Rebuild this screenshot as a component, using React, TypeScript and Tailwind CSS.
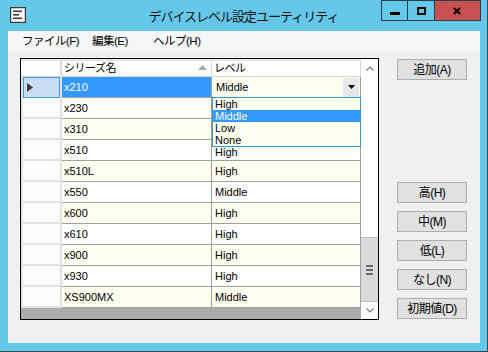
import React from "react";

const rows = [
  { name: "x210", level: "Middle" },
  { name: "x230", level: "" },
  { name: "x310", level: "" },
  { name: "x510", level: "High" },
  { name: "x510L", level: "High" },
  { name: "x550", level: "Middle" },
  { name: "x600", level: "High" },
  { name: "x610", level: "High" },
  { name: "x900", level: "High" },
  { name: "x930", level: "High" },
  { name: "XS900MX", level: "Middle" },
];

const levels = ["High", "Middle", "Low", "None"];

const WinButton = ({ label, className = "" }: { label: string; className?: string }) => (
  <div
    className={`w-[70px] h-[21px] bg-[#e1e1e1] border border-[#adadad] flex items-center justify-center text-[12px] leading-none tracking-[-0.5px] text-black ${className}`}
  >
    {label}
  </div>
);

const App = () => {
  return (
    <div className="w-[488px] h-[352px] bg-[#65c8eb] border-r border-b border-[#3b4a55] flex flex-col font-['Liberation_Sans','Noto_Sans_CJK_JP',sans-serif] text-black select-none overflow-hidden">
      {/* title bar */}
      <div className="h-[31px] flex shrink-0">
        <div className="w-[106px] pl-[10px] pt-[7px]">
          <svg width="16" height="16" viewBox="0 0 16 16">
            <rect x="0.5" y="0.5" width="15" height="15" fill="#fff" stroke="#3a3a3a" strokeWidth="1.5" />
            <rect x="3" y="3.5" width="9" height="1.6" fill="#3a3a3a" />
            <rect x="3" y="7" width="6" height="1.6" fill="#3a3a3a" />
            <rect x="3" y="10.5" width="9" height="1.6" fill="#3a3a3a" />
          </svg>
        </div>
        <div className="flex-1 flex items-center justify-center text-[13px] tracking-[-1px] text-[#111] pt-[2px]">
          デバイスレベル設定ユーティリティ
        </div>
        <div className="w-[106px] flex items-start justify-end pr-[6px]">
          <div className="w-[28px] h-[21px] border border-[#2c3c48] flex items-center justify-center">
            <div className="w-[10px] h-[3px] bg-black mt-[6px]" />
          </div>
          <div className="w-[27px] h-[21px] border border-l-0 border-[#2c3c48] flex items-center justify-center">
            <div className="w-[9px] h-[8px] border-2 border-black" />
          </div>
          <div className="w-[47px] h-[21px] bg-[#c75050] border border-l-0 border-[#2c3c48] flex items-center justify-center">
            <svg width="8" height="8" viewBox="0 0 8 8">
              <path d="M1 1 L7 7 M7 1 L1 7" stroke="#000" strokeWidth="2" />
            </svg>
          </div>
        </div>
      </div>

      {/* client */}
      <div className="ml-[8px] w-[472px] h-[312px] bg-[#f0f0f0] flex flex-col">
        <div className="h-[21px] bg-[#f5f6f7] flex items-center text-[11.5px] tracking-[-0.5px] pl-[14px]">
          <span className="w-[70px]">ファイル(F)</span>
          <span className="w-[61px]">編集(E)</span>
          <span>ヘルプ(H)</span>
        </div>

        <div className="flex pl-[12px] pt-[6px]">
          {/* grid */}
          <div className="w-[359px] h-[262px] border border-black bg-[#ababab] flex">
            <div className="w-[340px] flex flex-col">
              {/* header */}
              <div className="h-[18px] flex bg-white border-t-2 border-[#e6e6e6] text-[11px] tracking-[-0.5px]">
                <div className="w-[41px] h-full border-r-2 border-b border-[#d9d9d9]" />
                <div className="w-[150px] h-full border-r border-b border-[#d9d9d9] flex items-center pl-[2px] relative">
                  シリーズ名
                  <svg className="absolute right-[4px] top-[4px]" width="9" height="5" viewBox="0 0 9 5">
                    <path d="M0 5 L4.5 0 L9 5 Z" fill="#a8a8a8" />
                  </svg>
                </div>
                <div className="w-[149px] h-full border-r border-b border-[#d9d9d9] flex items-center pl-[2px]">
                  レベル
                </div>
              </div>

              {rows.map((r, i) => {
                const bg = i % 2 === 0 ? "bg-[#fffff0]" : "bg-white";
                const selected = i === 0;
                return (
                  <div key={r.name} className="h-[21px] flex text-[11px]">
                    {selected ? (
                      <div className="w-[41px] h-full bg-white border-l-2 border-r-2 border-[#e2e2e2] flex">
                        <div className="flex-1 bg-[#c9def5] border border-[#3c98d1] flex items-center pl-[3px]">
                          <svg width="6" height="9" viewBox="0 0 6 9">
                            <path d="M0 0 L6 4.5 L0 9 Z" fill="#3a3a3a" />
                          </svg>
                        </div>
                      </div>
                    ) : (
                      <div className="w-[41px] h-full bg-[#fcfcfc] border-l-2 border-r-2 border-b-2 border-[#e2e2e2]" />
                    )}
                    <div
                      className={`w-[150px] h-full border-r border-b border-[#a0a0a0] flex items-center pl-[2px] ${
                        selected ? "bg-[#3399ff] text-white" : bg
                      }`}
                    >
                      {r.name}
                    </div>
                    <div className={`w-[149px] h-full border-r border-b border-[#a0a0a0] flex items-center relative ${bg}`}>
                      {selected ? (
                        <>
                          <span className="pl-[4px] flex-1">{r.level}</span>
                          <div className="w-[16px] h-[19px] mr-[1px] bg-[#e8e8e8] flex items-center justify-center">
                            <svg width="7" height="4" viewBox="0 0 7 4">
                              <path d="M0 0 L7 0 L3.5 4 Z" fill="#000" />
                            </svg>
                          </div>
                          <div className="absolute left-0 top-[20px] w-[149px] h-[50px] border border-[#2e9ad3] bg-[#fffff0] z-10 flex flex-col">
                            {levels.map((l) => (
                              <div
                                key={l}
                                className={`h-[12px] leading-[12px] pl-[2px] ${
                                  l === "Middle" ? "bg-[#3399ff] text-white" : ""
                                }`}
                              >
                                {l}
                              </div>
                            ))}
                          </div>
                        </>
                      ) : (
                        <span className={`pl-[3px] ${i === 3 ? "pt-[5px]" : ""}`}>{r.level}</span>
                      )}
                    </div>
                  </div>
                );
              })}
            </div>

            {/* scrollbar */}
            <div className="w-[17px] flex flex-col bg-white">
              <div className="h-[18px] flex items-center justify-center">
                <svg width="8" height="5" viewBox="0 0 8 5">
                  <path d="M0.5 4.5 L4 1 L7.5 4.5" stroke="#7a7a7a" strokeWidth="1.2" fill="none" />
                </svg>
              </div>
              <div className="h-[160px]" />
              <div className="h-[65px] bg-[#dadada] border-y border-[#c2c2c2] flex flex-col items-center justify-center gap-[2px]">
                <div className="w-[7px] h-[2px] bg-[#6a6a6a]" />
                <div className="w-[7px] h-[2px] bg-[#6a6a6a]" />
                <div className="w-[7px] h-[2px] bg-[#6a6a6a]" />
              </div>
              <div className="h-[17px] flex items-center justify-center">
                <svg width="8" height="5" viewBox="0 0 8 5">
                  <path d="M0.5 0.5 L4 4 L7.5 0.5" stroke="#7a7a7a" strokeWidth="1.2" fill="none" />
                </svg>
              </div>
            </div>
          </div>

          {/* buttons */}
          <div className="ml-[18px] pt-[1px] flex flex-col">
            <WinButton label="追加(A)" />
            <div className="mt-[102px] flex flex-col gap-[8px]">
              <WinButton label="高(H)" />
              <WinButton label="中(M)" />
              <WinButton label="低(L)" />
              <WinButton label="なし(N)" />
              <WinButton label="初期値(D)" />
            </div>
          </div>
        </div>
      </div>
    </div>
  );
};

export default App;
